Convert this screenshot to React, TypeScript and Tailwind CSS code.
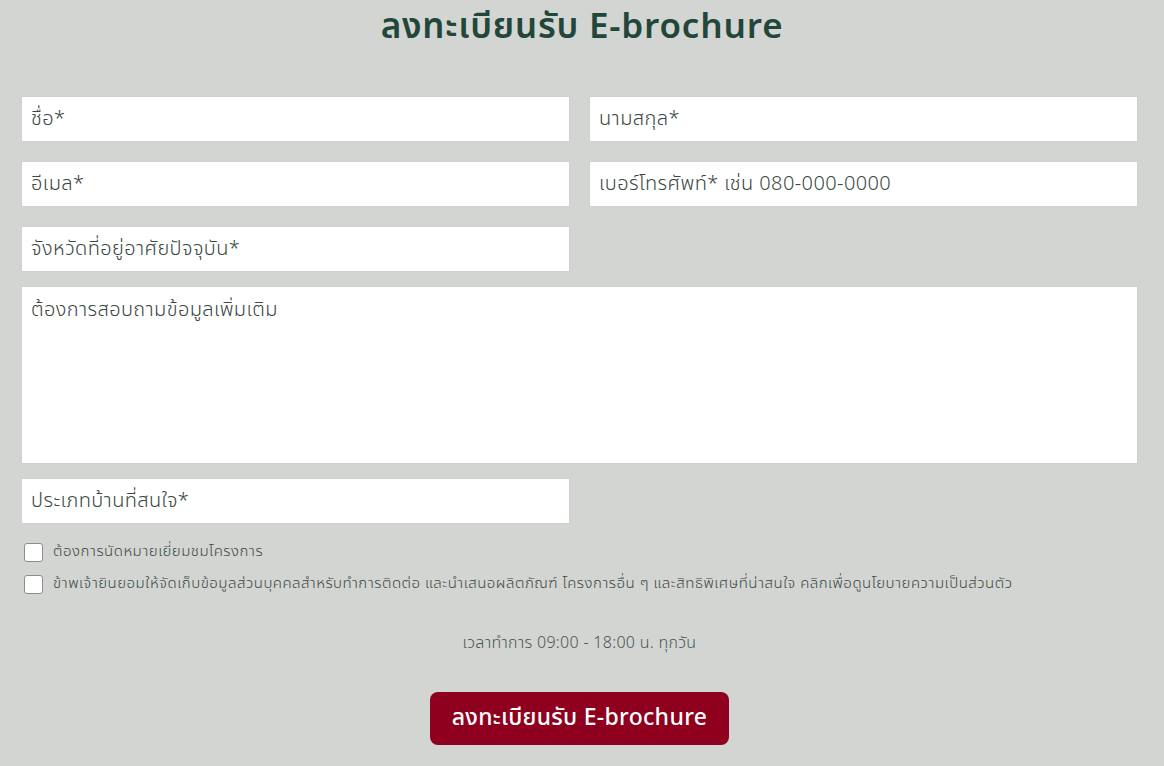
const font = { fontFamily: '"Noto Sans Thai", "Noto Sans", "Liberation Sans", sans-serif' }

function Field({ label, className = '' }: { label: string; className?: string }) {
  return (
    <div className={`h-[46px] bg-white border border-[#cfd1ce] flex items-center px-[9px] text-[20px] font-light tracking-[0.4px] text-[#3a4842] ${className}`}>
      {label}
    </div>
  )
}

function Check({ label }: { label: string }) {
  return (
    <div className="flex items-center gap-[10px] h-[19px]">
      <div className="w-[19px] h-[19px] bg-white border border-[#8a8f8c] rounded-[3px] ml-[3px] shrink-0" />
      <span className="text-[15px] font-light tracking-[0.5px] text-[#3a4842]">{label}</span>
    </div>
  )
}

export default function App() {
  return (
    <div className="w-[1164px] h-[766px] bg-[#d3d5d2] overflow-hidden" style={font}>
      <h1 className="h-[56px] flex items-center justify-center text-[35px] font-semibold text-[#23463a] tracking-[0.8px]">
        ลงทะเบียนรับ E-brochure
      </h1>

      <div className="pl-[21px] pr-[26px] mt-[40px]">
        <div className="grid grid-cols-2 gap-x-[19px] gap-y-[19px]">
          <Field label="ชื่อ*" />
          <Field label="นามสกุล*" />
          <Field label="อีเมล*" />
          <Field label="เบอร์โทรศัพท์* เช่น 080-000-0000" />
          <Field label="จังหวัดที่อยู่อาศัยปัจจุบัน*" />
        </div>

        <div className="mt-[14px] h-[178px] bg-white border border-[#cfd1ce] px-[9px] pt-[8px] text-[20px] font-light tracking-[0.4px] text-[#3a4842]">
          ต้องการสอบถามข้อมูลเพิ่มเติม
        </div>

        <div className="grid grid-cols-2 gap-x-[19px] mt-[14px]">
          <Field label="ประเภทบ้านที่สนใจ*" />
        </div>

        <div className="mt-[19px] flex flex-col gap-[13px]">
          <Check label="ต้องการนัดหมายเยี่ยมชมโครงการ" />
          <Check label="ข้าพเจ้ายินยอมให้จัดเก็บข้อมูลส่วนบุคคลสำหรับทำการติดต่อ และนำเสนอผลิตภัณฑ์ โครงการอื่น ๆ และสิทธิพิเศษที่น่าสนใจ คลิกเพื่อดูนโยบายความเป็นส่วนตัว" />
        </div>

        <p className="mt-[37px] text-center text-[16px] font-light tracking-[0.3px] text-[#4a5550]">เวลาทำการ 09:00 - 18:00 น. ทุกวัน</p>

        <div className="flex justify-center mt-[37px]">
          <button className="w-[299px] h-[53px] rounded-[8px] bg-[#8e001e] text-white text-[23px] font-medium tracking-[0.3px]">
            ลงทะเบียนรับ E-brochure
          </button>
        </div>
      </div>
    </div>
  )
}
